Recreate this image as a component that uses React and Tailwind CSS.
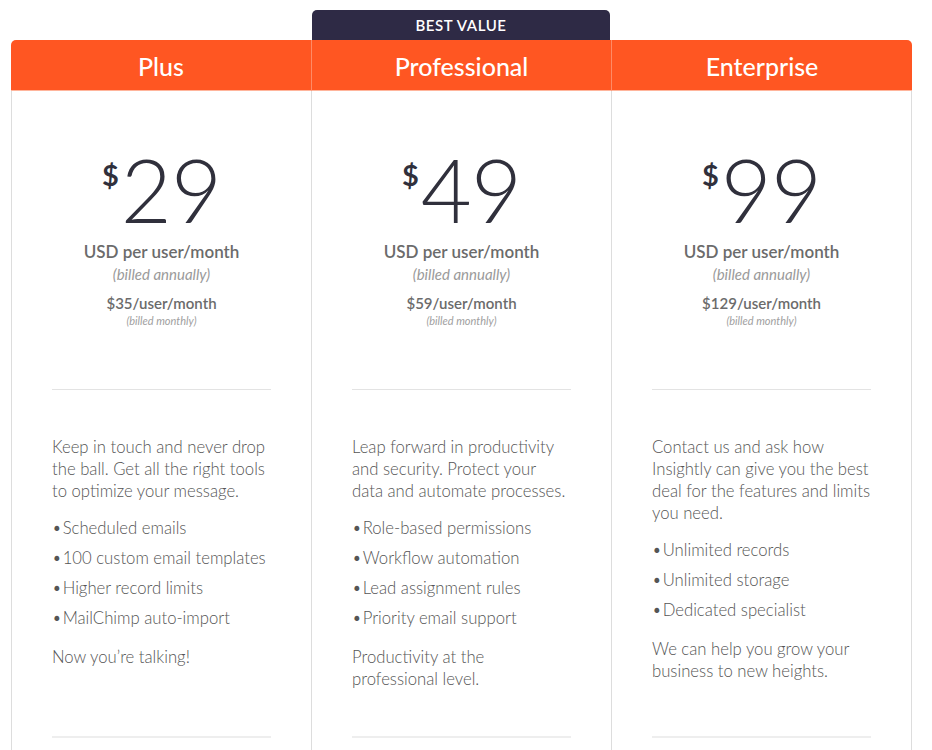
import React from 'react';

const plans = [
  {
    name: 'Plus',
    price: '29',
    monthly: '$35/user/month',
    intro: 'Keep in touch and never drop the ball. Get all the right tools to optimize your message.',
    features: ['Scheduled emails', '100 custom email templates', 'Higher record limits', 'MailChimp auto-import'],
    outro: 'Now you’re talking!',
  },
  {
    name: 'Professional',
    price: '49',
    monthly: '$59/user/month',
    best: true,
    intro: 'Leap forward in productivity and security. Protect your data and automate processes.',
    features: ['Role-based permissions', 'Workflow automation', 'Lead assignment rules', 'Priority email support'],
    outro: 'Productivity at the professional level.',
  },
  {
    name: 'Enterprise',
    price: '99',
    monthly: '$129/user/month',
    intro: 'Contact us and ask how Insightly can give you the best deal for the features and limits you need.',
    features: ['Unlimited records', 'Unlimited storage', 'Dedicated specialist'],
    outro: 'We can help you grow your business to new heights.',
  },
];

const PlanColumn = ({ plan, index }) => {
  const isFirst = index === 0;
  const isLast = index === plans.length - 1;

  return (
    <div className={`flex flex-col ${isLast ? 'w-[301px]' : 'w-[300px]'}`}>
      {/* Tab above header */}
      <div className="h-[30px] flex items-end">
        {plan.best && (
          <div className="mx-[1px] w-full h-[30px] bg-[#2e2a45] rounded-t-[5px] flex items-center justify-center text-white text-[15px] font-semibold tracking-[0.04em]">
            BEST VALUE
          </div>
        )}
      </div>

      {/* Orange header */}
      <div
        className={`h-[51px] pt-[3px] bg-[#ff5622] text-white flex items-center justify-center text-[25px] font-medium border-b border-[#ffb59c] ${
          isFirst ? 'rounded-tl-[5px]' : 'border-l border-l-[#ff8a66]'
        } ${isLast ? 'rounded-tr-[5px]' : ''}`}
      >
        {plan.name}
      </div>

      {/* Body */}
      <div className={`flex flex-col px-10 border-l border-[#dddddd] ${isLast ? 'border-r' : ''}`}>
        <div className="flex flex-col items-center pt-[54px] h-[298px]">
          <div className="flex items-start text-[#30303c]">
            <span className="text-[29px] font-bold leading-none mt-[15px] mr-[2px]">$</span>
            <span className="text-[88px] font-light leading-none tracking-[-0.01em]">{plan.price}</span>
          </div>
          <div className="mt-[8px] text-[17px] font-semibold text-[#6b6b6b] leading-[22px]">USD per user/month</div>
          <div className="text-[15px] italic text-[#9a9a9a] leading-[22px]">(billed annually)</div>
          <div className="mt-[7px] text-[15px] font-semibold text-[#6b6b6b] leading-[22px]">{plan.monthly}</div>
          <div className="text-[11px] italic text-[#a0a0a0] leading-[14px]">(billed monthly)</div>
        </div>

        <div className="border-t border-[#e3e3e3]" />

        <div className="h-[346px] pt-[46px] text-[16.7px] leading-[22px] text-[#555555] font-light">
          <p>{plan.intro}</p>
          <ul className="mt-[15px] flex flex-col gap-[8px]">
            {plan.features.map((f) => (
              <li key={f}>
                <span className="mr-[1px]">•</span>
                {f}
              </li>
            ))}
          </ul>
          <p className="mt-[17px]">{plan.outro}</p>
        </div>

        <div className="border-t-2 border-[#eeeeee]" />
        <div className="h-[40px]" />
      </div>
    </div>
  );
};

export default function App() {
  return (
    <div className="min-h-screen bg-white pl-[11px] pt-[10px] font-['Lato',sans-serif]">
      <div className="flex">
        {plans.map((plan, i) => (
          <PlanColumn key={plan.name} plan={plan} index={i} />
        ))}
      </div>
    </div>
  );
}
